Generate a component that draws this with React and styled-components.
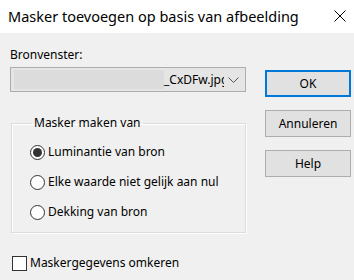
import React from "react";
import styled, { createGlobalStyle } from "styled-components";

const Global = createGlobalStyle`
  html, body { margin: 0; padding: 0; background: #f0f0f0; }
  body { font-family: "Noto Sans", "Open Sans", sans-serif; font-size: 12px; color: #000; }
  * { box-sizing: border-box; }
`;

const Window = styled.div`
  width: 354px;
  height: 280px;
  background: #f0f0f0;
  display: flex;
  flex-direction: column;
  overflow: hidden;
`;

const TitleBar = styled.div`
  height: 33px;
  background: #fff;
  display: flex;
  align-items: center;
  justify-content: space-between;
  padding: 0 7px 2px 8px;
`;

const Title = styled.div`
  font-size: 14.5px;
  color: #000;
  white-space: nowrap;
`;

const Close = styled.div`
  width: 14px;
  height: 14px;
  display: flex;
`;

const Body = styled.div`
  display: flex;
  gap: 19px;
  padding: 14px 0 0 10px;
`;

const LeftCol = styled.div`
  width: 236px;
  display: flex;
  flex-direction: column;
`;

const Label = styled.div`
  line-height: 16px;
  height: 16px;
`;

const Combo = styled.div`
  margin-top: 4px;
  height: 25px;
  border: 1px solid #adadad;
  background: #e5e5e5;
  display: flex;
  align-items: center;
  padding-left: 3px;
`;

const ComboValue = styled.div`
  width: 210px;
  height: 19px;
  overflow: hidden;
  white-space: nowrap;
  display: flex;
  align-items: center;
`;

const Obscured = styled.span`
  flex: 0 0 150px;
  height: 19px;
  background: #dcdcdc;
`;

const ComboText = styled.span`
  flex: none;
  line-height: 19px;
`;

const Chevron = styled.div`
  flex: 1;
  display: flex;
  justify-content: center;
  align-items: center;
  padding-right: 2px;
`;

const Group = styled.fieldset`
  margin: 23px 0 0 1px;
  padding: 13px 0 12px 18px;
  border: 1px solid #dcdcdc;
  box-shadow: inset 1px 1px 0 #fff, 1px 1px 0 #fff;
  display: flex;
  flex-direction: column;
  gap: 14px;
  min-width: 0;
`;

const Legend = styled.legend`
  margin-left: 2px;
  padding: 0 2px;
  line-height: 16px;
`;

const OptionRow = styled.label`
  display: flex;
  align-items: center;
  gap: 3px;
  height: 16px;
  line-height: 16px;
  white-space: nowrap;
`;

const RadioCircle = styled.span`
  width: 15px;
  height: 15px;
  border-radius: 50%;
  border: 1px solid #333;
  background: #fff;
  display: flex;
  align-items: center;
  justify-content: center;
  &::after {
    content: "";
    width: 9px;
    height: 9px;
    border-radius: 50%;
    background: ${(p) => (p.$checked ? "#333" : "transparent")};
  }
`;

const CheckRow = styled(OptionRow)`
  margin-top: 22px;
  padding-left: 2px;
`;

const CheckBox = styled.span`
  width: 15px;
  height: 15px;
  border: 1px solid #333;
  background: #fff;
`;

const RightCol = styled.div`
  width: 86px;
  margin-top: 23px;
  display: flex;
  flex-direction: column;
  gap: 13px;
`;

const Button = styled.div`
  height: 27px;
  background: #e1e1e1;
  border: ${(p) => (p.$default ? "2px solid #0078d7" : "1px solid #adadad")};
  display: flex;
  align-items: center;
  justify-content: center;
  line-height: 16px;
`;

export default function App() {
  return (
    <Window>
      <Global />
      <TitleBar>
        <Title>Masker toevoegen op basis van afbeelding</Title>
        <Close>
          <svg width="14" height="14" viewBox="0 0 14 14">
            <path d="M1.5 1.5 L12.5 12.5 M12.5 1.5 L1.5 12.5" stroke="#000" strokeWidth="1" fill="none" />
          </svg>
        </Close>
      </TitleBar>
      <Body>
        <LeftCol>
          <Label>Bronvenster:</Label>
          <Combo>
            <ComboValue>
              <Obscured />
              <ComboText>_CxDFw.jpg</ComboText>
            </ComboValue>
            <Chevron>
              <svg width="11" height="6" viewBox="0 0 11 6">
                <path d="M0.5 0.5 L5.5 5.5 L10.5 0.5" stroke="#555" strokeWidth="1" fill="none" />
              </svg>
            </Chevron>
          </Combo>
          <Group>
            <Legend>Masker maken van</Legend>
            <OptionRow>
              <RadioCircle $checked />
              Luminantie van bron
            </OptionRow>
            <OptionRow>
              <RadioCircle />
              Elke waarde niet gelijk aan nul
            </OptionRow>
            <OptionRow>
              <RadioCircle />
              Dekking van bron
            </OptionRow>
          </Group>
          <CheckRow>
            <CheckBox />
            Maskergegevens omkeren
          </CheckRow>
        </LeftCol>
        <RightCol>
          <Button $default>OK</Button>
          <Button>Annuleren</Button>
          <Button>Help</Button>
        </RightCol>
      </Body>
    </Window>
  );
}
